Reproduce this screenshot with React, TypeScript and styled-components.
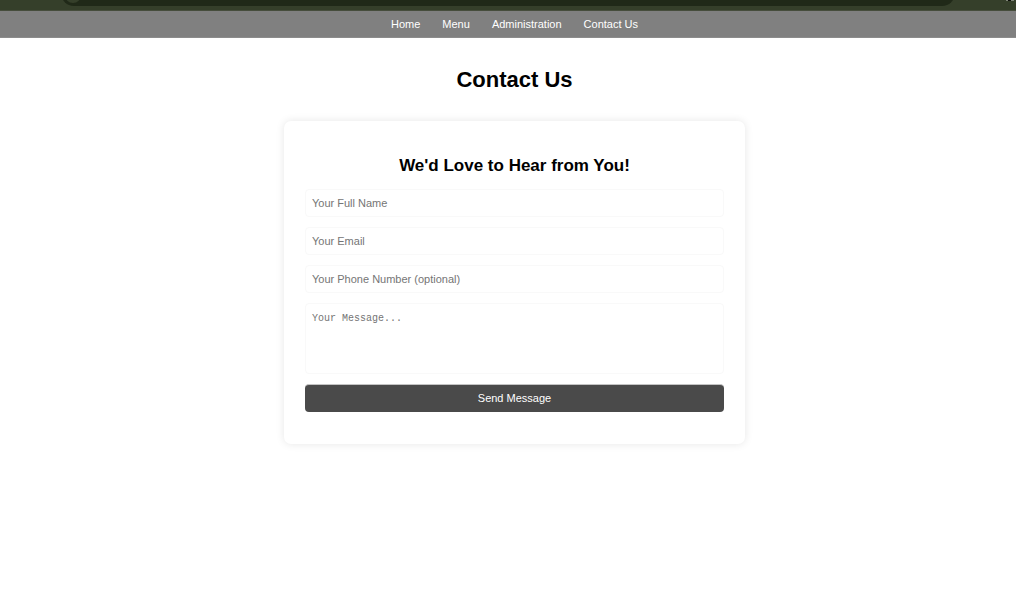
import React from "react";
import styled, { createGlobalStyle } from "styled-components";

const GlobalStyle = createGlobalStyle`
  *, *::before, *::after { box-sizing: border-box; }
  body {
    margin: 0;
    background: #fff;
    color: #000;
    font-family: "Liberation Sans", Arial, sans-serif;
    font-size: 11px;
  }
`;

const BrowserStrip = styled.div`
  display: flex;
  align-items: flex-end;
  height: 11px;
  padding: 0 2px 4px 61px;
  overflow: hidden;
  background: #353f2a;
  border-bottom: 1px solid #464d3c;
`;

const AddressBar = styled.div`
  display: flex;
  align-items: center;
  flex: 1;
  height: 26px;
  margin-right: 51px;
  padding-left: 4px;
  border-radius: 13px;
  background: #202918;
`;

const SiteInfo = styled.span`
  width: 16px;
  height: 20px;
  border-radius: 8px;
  background: #353f2a;
`;

const ToolbarMark = styled.svg`
  display: block;
  width: 8px;
  height: 6px;
`;

const Nav = styled.nav`
  display: flex;
  justify-content: center;
  align-items: center;
  gap: 22px;
  height: 27px;
  padding-left: 13px;
  background: #808080;
  border-bottom: 1px solid #8c8c8c;
`;

const NavLink = styled.a`
  color: #fff;
  line-height: 13px;
  text-decoration: none;
`;

const Main = styled.main`
  display: flex;
  flex-direction: column;
  align-items: center;
  padding: 28px 0 28px 13px;
`;

const Title = styled.h1`
  margin: 0 0 28px;
  font-size: 22px;
  line-height: 27px;
`;

const Card = styled.form`
  display: flex;
  flex-direction: column;
  gap: 10px;
  width: 100%;
  max-width: 461px;
  padding: 35px 21px 32px;
  border-radius: 7px;
  background: #fff;
  box-shadow: 0 0 8px rgba(0, 0, 0, 0.1);
`;

const CardTitle = styled.h2`
  margin: 0 0 3px;
  font-size: 17px;
  line-height: 20px;
  text-align: center;
`;

const Field = styled.input`
  width: 100%;
  height: 28px;
  padding: 0 6px 1px;
  border: 1px solid #f9f9f9;
  border-radius: 4px;
  background: #fff;
  font: 11px "Liberation Sans", Arial, sans-serif;
  &::placeholder { color: #757575; }
`;

const Message = styled.textarea`
  display: block;
  width: 100%;
  height: 71px;
  padding: 8px 6px;
  border: 1px solid #f9f9f9;
  border-radius: 4px;
  background: #fff;
  font: 10px/13px Consolas, "Liberation Mono", monospace;
  resize: none;
  &::placeholder { color: #757575; }
`;

const SubmitButton = styled.button`
  height: 28px;
  padding: 0 0 1px;
  border: 0;
  border-top: 1px solid #c4c4c4;
  border-radius: 4px;
  background: #4a4a4a;
  color: #fff;
  font: 11px "Liberation Sans", Arial, sans-serif;
`;

const links = ["Home", "Menu", "Administration", "Contact Us"];

export default function App() {
  return (
    <>
      <GlobalStyle />
      <BrowserStrip aria-hidden="true">
        <AddressBar>
          <SiteInfo />
        </AddressBar>
        <ToolbarMark viewBox="0 0 8 6">
          <path d="M0 0h8v1H0z" fill="#7f8578" />
          <path d="M2 0h3v1H2z" fill="#0b0d09" />
        </ToolbarMark>
      </BrowserStrip>
      <Nav>
        {links.map((label) => (
          <NavLink key={label} href="#">{label}</NavLink>
        ))}
      </Nav>
      <Main>
        <Title>Contact Us</Title>
        <Card onSubmit={(event) => event.preventDefault()}>
          <CardTitle>We'd Love to Hear from You!</CardTitle>
          <Field type="text" placeholder="Your Full Name" aria-label="Your Full Name" />
          <Field type="email" placeholder="Your Email" aria-label="Your Email" />
          <Field type="tel" placeholder="Your Phone Number (optional)" aria-label="Your Phone Number (optional)" />
          <Message placeholder="Your Message..." aria-label="Your Message" />
          <SubmitButton type="submit">Send Message</SubmitButton>
        </Card>
      </Main>
    </>
  );
}
